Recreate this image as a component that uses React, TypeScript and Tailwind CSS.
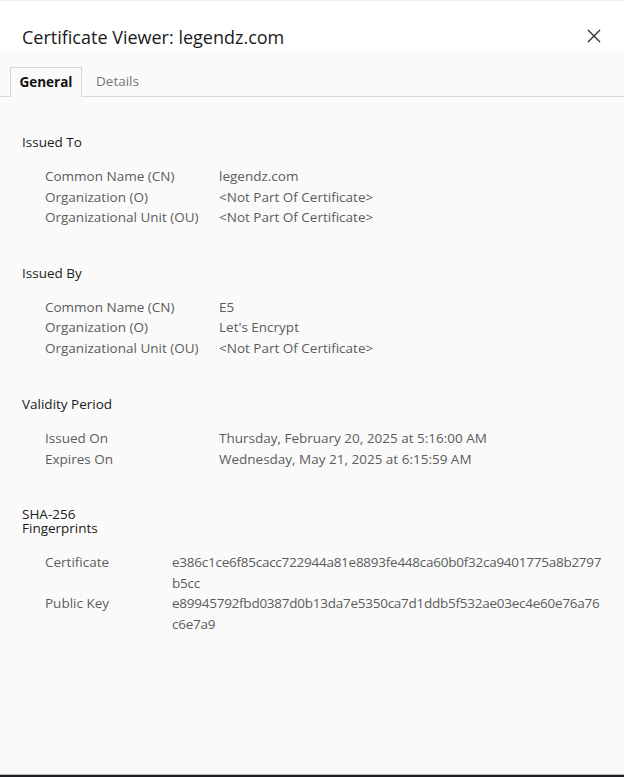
import React from 'react';

// Certificate viewer dialog (General tab)

type Row = { label: string; value: string[] };

const FONT = { fontFamily: '"Open Sans", "Noto Sans", sans-serif' };

function Section({
  title,
  rows,
  labelWidth,
  gapTop,
  mono = false,
}: {
  title: string[];
  rows: Row[];
  labelWidth: string;
  gapTop: string;
  mono?: boolean;
}) {
  return (
    <div className={gapTop}>
      <div className="text-[13.5px] leading-[14px] text-[#1c1c1c]">
        {title.map((t, i) => (
          <React.Fragment key={t}>
            {i > 0 && <br />}
            {t}
          </React.Fragment>
        ))}
      </div>
      <div className="mt-[17px] pl-[23px]">
        {rows.map((r) => (
          <div key={r.label} className="flex text-[13.5px] leading-[20.5px] text-[#5c5c5c]">
            <div className={`${labelWidth} shrink-0`}>{r.label}</div>
            <div className={mono ? 'whitespace-nowrap tracking-[-0.25px]' : 'whitespace-nowrap'}>
              {r.value.map((v, i) => (
                <div key={i}>{v}</div>
              ))}
            </div>
          </div>
        ))}
      </div>
    </div>
  );
}

export default function App() {
  return (
    <div className="w-[624px] h-[777px] flex flex-col bg-[#fafafa] overflow-hidden" style={FONT}>
      <div className="h-[51px] shrink-0 bg-white border-t border-[#eeeeee] flex items-center justify-between pl-[22px] pr-[23px]">
        <h1 className="text-[18px] text-[#1a1a1a] mt-[22px]">Certificate Viewer: legendz.com</h1>
        <button className="mt-[20px] text-[#333]">
          <svg width="14" height="14" viewBox="0 0 14 14" fill="none" stroke="currentColor" strokeWidth="1.4">
            <path d="M1 1L13 13M13 1L1 13" />
          </svg>
        </button>
      </div>

      <div className="h-[46px] shrink-0 border-b border-[#d6d6d6] flex items-end pl-[10px]">
        <div className="h-[30px] w-[72px] -mb-px border border-b-0 border-[#d6d6d6] bg-[#fafafa] flex items-center justify-center text-[13.5px] font-bold text-[#111]">
          General
        </div>
        <div className="h-[30px] ml-[14px] flex items-center text-[13.5px] text-[#777]">Details</div>
      </div>

      <div className="flex-1 pl-[22px] pr-[20px] pt-[38px]">
        <Section
          title={['Issued To']}
          labelWidth="w-[174px]"
          gapTop=""
          rows={[
            { label: 'Common Name (CN)', value: ['legendz.com'] },
            { label: 'Organization (O)', value: ['<Not Part Of Certificate>'] },
            { label: 'Organizational Unit (OU)', value: ['<Not Part Of Certificate>'] },
          ]}
        />
        <Section
          title={['Issued By']}
          labelWidth="w-[174px]"
          gapTop="mt-[38px]"
          rows={[
            { label: 'Common Name (CN)', value: ['E5'] },
            { label: 'Organization (O)', value: ["Let's Encrypt"] },
            { label: 'Organizational Unit (OU)', value: ['<Not Part Of Certificate>'] },
          ]}
        />
        <Section
          title={['Validity Period']}
          labelWidth="w-[174px]"
          gapTop="mt-[39px]"
          rows={[
            { label: 'Issued On', value: ['Thursday, February 20, 2025 at 5:16:00 AM'] },
            { label: 'Expires On', value: ['Wednesday, May 21, 2025 at 6:15:59 AM'] },
          ]}
        />
        <Section
          title={['SHA-256', 'Fingerprints']}
          labelWidth="w-[127px]"
          gapTop="mt-[38px]"
          mono
          rows={[
            {
              label: 'Certificate',
              value: ['e386c1ce6f85cacc722944a81e8893fe448ca60b0f32ca9401775a8b2797', 'b5cc'],
            },
            {
              label: 'Public Key',
              value: ['e89945792fbd0387d0b13da7e5350ca7d1ddb5f532ae03ec4e60e76a76', 'c6e7a9'],
            },
          ]}
        />
      </div>

      <div className="h-[3px] shrink-0 border-t border-[#b8b8bc] bg-[#202024]" />
    </div>
  );
}
